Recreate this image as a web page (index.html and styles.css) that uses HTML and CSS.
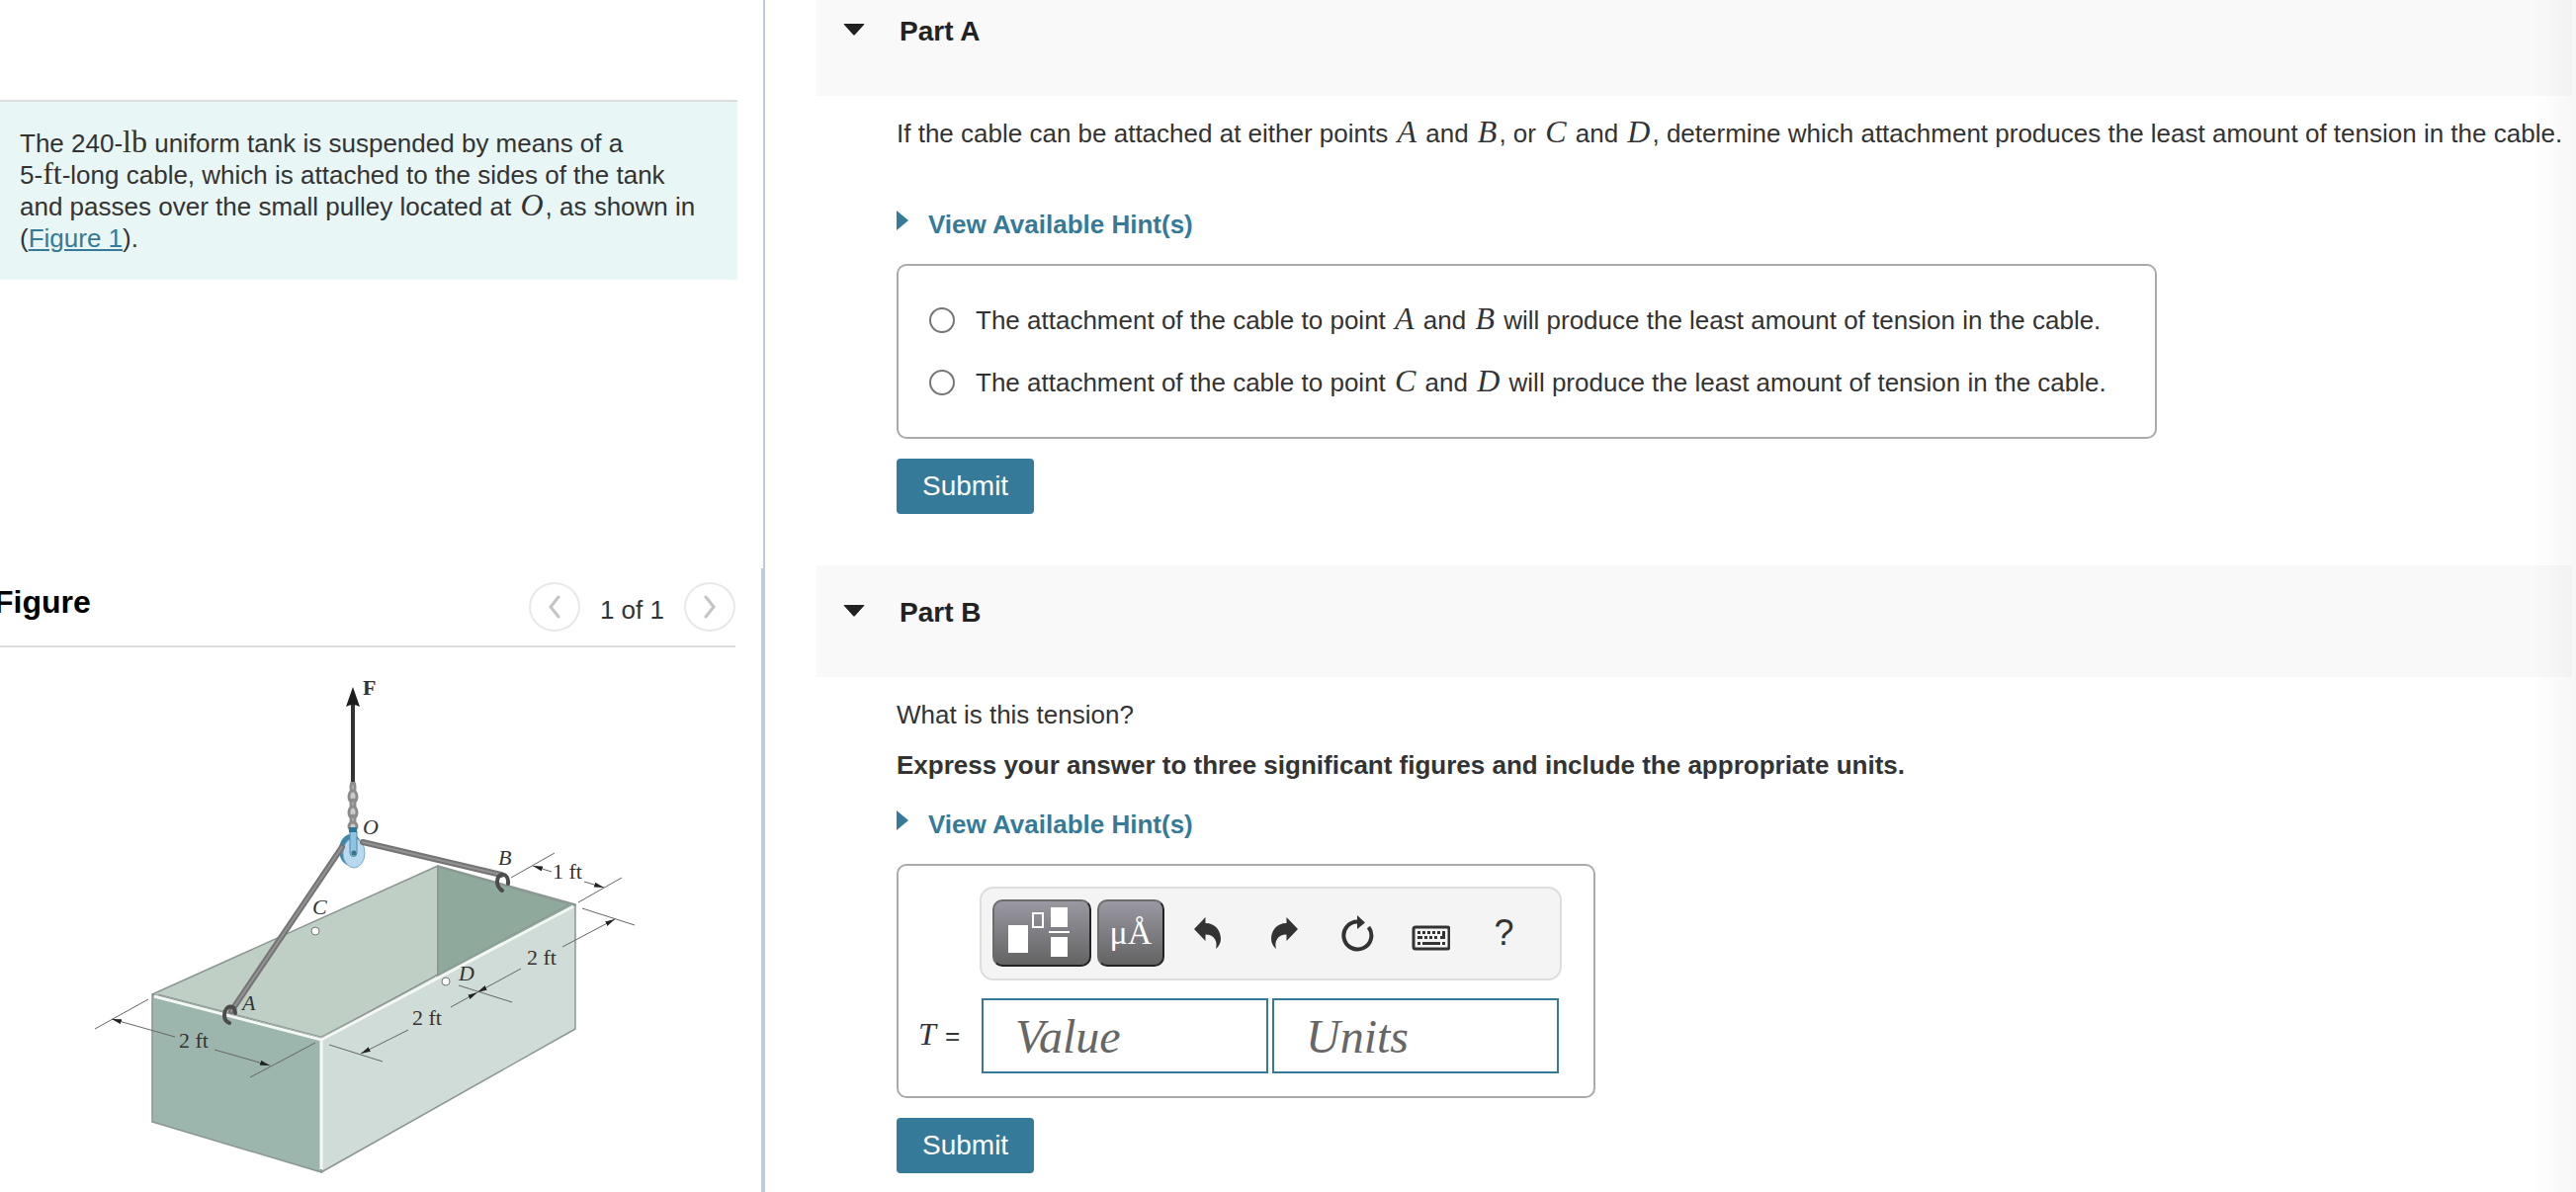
FILE: index.html
```html
<!DOCTYPE html>
<html lang="en">
<head>
  <meta charset="UTF-8" />
  <title>Tank suspended by a cable</title>
  <link rel="stylesheet" href="styles.css">
</head>
<body>
  <aside class="sidebar">
    <section class="problem">
      <div class="problem-text">
        The 240-<span class="math rm">lb</span> uniform tank is suspended by means of a<br>
        5-<span class="math rm">ft</span>-long cable, which is attached to the sides of the tank<br>
        and passes over the small pulley located at <span class="math">O</span>, as shown in<br>
        (<a href="#figure">Figure 1</a>).
      </div>
    </section>

    <section class="figure" id="figure">
      <div class="figure-head">
        <h2>Figure</h2>
        <div class="pager">
          <button class="pager-btn" aria-label="Previous figure">
            <svg width="14" height="24" viewBox="0 0 14 24"><path d="M11 2L3 12l8 10" /></svg>
          </button>
          <span class="pager-count">1 of 1</span>
          <button class="pager-btn" aria-label="Next figure">
            <svg width="14" height="24" viewBox="0 0 14 24"><path d="M3 2l8 10-8 10" /></svg>
          </button>
        </div>
      </div>

      <svg class="drawing" viewBox="0 0 580 540" role="img" aria-label="Tank hanging from a pulley">
        <defs>
          <marker id="arrow" viewBox="0 0 12 6" refX="12" refY="3" markerWidth="10" markerHeight="5" markerUnits="userSpaceOnUse" orient="auto-start-reverse">
            <path d="M0 0L12 3L0 6Z" fill="#222" />
          </marker>
        </defs>

        <!-- tank -->
        <g stroke="#8b9691" stroke-width="1.5" stroke-linejoin="round">
          <path d="M74 345L363 215V325L245 390Z" fill="#bfcfc6" />
          <path d="M363 215L502 254L363 327Z" fill="#8fa99d" />
          <path d="M74 345L245 390V525L74 474Z" fill="#9db6ad" />
          <path d="M245 390L502 254V380L245 525Z" fill="#cfdcd7" />
        </g>
        <path d="M76 347L245 391L500 256M245 391V522" fill="none" stroke="#f3f8f5" stroke-width="3" />
        <path d="M80 345L245 388L496 254L363 216" fill="none" stroke="#8b9691" />
        <g fill="#fff" stroke="#777">
          <circle cx="239" cy="281" r="4" />
          <circle cx="371" cy="332" r="4" />
        </g>

        <!-- dimension lines -->
        <g class="dim">
          <path d="M16 380L70 350M173 429L239 394M253 396L307 413M384 336L438 353M509 258L562 275M505 252L549 227M437 227L481 202" />
          <path d="M33 370L97 388" marker-start="url(#arrow)" />
          <path d="M137 401L193 417" marker-end="url(#arrow)" />
          <path d="M285 405L333 381" marker-start="url(#arrow)" />
          <path d="M376 358L403 343" marker-end="url(#arrow)" />
          <path d="M403 343L447 319" marker-start="url(#arrow)" />
          <path d="M489 297L542 269" marker-end="url(#arrow)" />
          <path d="M459 215L478 221" marker-start="url(#arrow)" />
          <path d="M511 231L531 237" marker-end="url(#arrow)" />
        </g>

        <!-- chain and pulley -->
        <g fill="#ccc" stroke="#8c8c8c" stroke-width="3">
          <ellipse cx="277" cy="136" rx="2" ry="6" />
          <ellipse cx="277" cy="145" rx="4" ry="6" />
          <ellipse cx="277" cy="153" rx="2" ry="5" />
          <ellipse cx="277" cy="161" rx="4" ry="6" />
          <ellipse cx="277" cy="169" rx="2" ry="5" />
          <ellipse cx="277" cy="175" rx="4" ry="4" />
        </g>
        <ellipse cx="275" cy="199" rx="12" ry="16" fill="#3f86a8" />
        <ellipse cx="278" cy="202" rx="11" ry="15" fill="#b9d9ee" stroke="#7fabc5" />
        <path d="M274 180h7v22a3 3 0 0 1-7 0Z" fill="#8fc3df" stroke="#4d8bab" />
        <path d="M273 176h8v5h-8Z" fill="#2f7595" />
        <circle cx="278" cy="202" r="2.5" fill="#3b6f8b" />

        <!-- cable and hooks -->
        <g fill="none" stroke-linecap="round">
          <path d="M266 196L154 362M287 191L427 224" stroke="#747474" stroke-width="6" />
          <path d="M266 196L154 362M287 191L427 224" stroke="#929292" stroke-width="2" />
          <path d="M158 364C158 354 147 356 147 366C147 370 149 373 152 374" stroke="#4c4c4c" stroke-width="4" />
          <path d="M434 233C435 221 423 221 423 231C423 235 425 238 428 240" stroke="#4c4c4c" stroke-width="4" />
        </g>
        <path d="M277 130V50" stroke="#333" stroke-width="4" />
        <path d="M277 34L284 54Q277 50 270 54Z" fill="#1d1d1d" />

        <g class="labels">
          <text class="vec" x="287" y="42">F</text>
          <text class="pt" x="287" y="183">O</text>
          <text class="pt" x="236" y="264">C</text>
          <text class="pt" x="165" y="361">A</text>
          <text class="pt" x="424" y="214">B</text>
          <text class="pt" x="384" y="331">D</text>
          <text x="479" y="228">1 ft</text>
          <text x="453" y="315">2 ft</text>
          <text x="337" y="376">2 ft</text>
          <text x="101" y="399">2 ft</text>
        </g>
      </svg>
    </section>
  </aside>

  <main class="parts">
    <section class="part">
      <header class="part-head">
        <svg class="caret" width="22" height="12" viewBox="0 0 22 12"><path d="M1 0h20q1 0 0 1L12 11q-1 1-2 0L1 1Q0 0 1 0Z" /></svg>
        <h2>Part A</h2>
      </header>
      <div class="part-body">
        <p class="question">If the cable can be attached at either points <span class="math">A</span> and <span class="math">B</span>, or <span class="math">C</span> and <span class="math">D</span>, determine which attachment produces the least amount of tension in the cable.</p>
        <a class="hints hints-a" href="#hints-a"><svg width="12" height="20" viewBox="0 0 12 20"><path d="M0 0L12 10L0 20Z" /></svg>View Available Hint(s)</a>
        <div class="answer choices">
          <label class="choice"><input type="radio" name="attachment" value="ab"><span>The attachment of the cable to point <span class="math">A</span> and <span class="math">B</span> will produce the least amount of tension in the cable.</span></label>
          <label class="choice"><input type="radio" name="attachment" value="cd"><span>The attachment of the cable to point <span class="math">C</span> and <span class="math">D</span> will produce the least amount of tension in the cable.</span></label>
        </div>
        <button class="submit">Submit</button>
      </div>
    </section>

    <section class="part">
      <header class="part-head">
        <svg class="caret" width="22" height="12" viewBox="0 0 22 12"><path d="M1 0h20q1 0 0 1L12 11q-1 1-2 0L1 1Q0 0 1 0Z" /></svg>
        <h2>Part B</h2>
      </header>
      <div class="part-body">
        <p class="question">What is this tension?</p>
        <p class="instructions">Express your answer to three significant figures and include the appropriate units.</p>
        <a class="hints" href="#hints-b"><svg width="12" height="20" viewBox="0 0 12 20"><path d="M0 0L12 10L0 20Z" /></svg>View Available Hint(s)</a>
        <div class="answer entry">
          <div class="toolbar">
            <button class="tool-dark tool-wide" aria-label="Templates">
              <svg width="96" height="64" viewBox="2 2 96 64">
                <path d="M16 26h20v28H16zM59 8h17v20H59zM57 32h21v2H57zM59 38h17v20H59z" fill="#fff" />
                <path d="M41 14h10v14H41z" fill="none" stroke="#fff" stroke-width="2" />
              </svg>
            </button>
            <button class="tool-dark" aria-label="Units symbols">μÅ</button>
            <div class="tool-icons">
              <button class="tool" aria-label="Undo">
                <svg width="40" height="40" viewBox="0 0 40 40"><path d="M6 16L17.5 4V10C28 10 33 18 33 26C33 30 31 33.500 28 36C30 29 27 21.500 17.500 21.500V28Z" /></svg>
              </button>
              <button class="tool" aria-label="Redo">
                <svg width="40" height="40" viewBox="0 0 40 40"><path d="M36 16L24.500 4V10C14 10 9 18 9 26C9 30 11 33.500 14 36C12 29 15 21.500 24.500 21.500V28Z" /></svg>
              </button>
              <button class="tool" aria-label="Reset">
                <svg width="40" height="40" viewBox="0 0 40 40"><path d="M21 2L29 9.500L21 16Z" /><path d="M22 8.500A14 14 0 1 0 32.500 14" fill="none" stroke="#333" stroke-width="4" /></svg>
              </button>
              <button class="tool" aria-label="Keyboard">
                <svg width="40" height="40" viewBox="0 0 40 40">
                  <rect x="3" y="14" width="36" height="22" rx="2" fill="none" stroke="#333" stroke-width="3" />
                  <path d="M7 18h3v3H7zM12 18h3v3h-3zM17 18h3v3h-3zM22 18h3v3h-3zM27 18h3v3h-3zM32 18h3v8h-5v-3h2zM7 23h5v3H7zM14 23h3v3h-3zM19 23h3v3h-3zM24 23h3v3h-3zM7 29h3v3H7zM12 29h18v3H12zM32 29h3v3h-3z" />
                </svg>
              </button>
              <button class="tool" aria-label="Help">?</button>
            </div>
          </div>
          <div class="fields">
            <label for="value"><span class="math">T</span> =</label>
            <input id="value" type="text" placeholder="Value">
            <input id="units" type="text" placeholder="Units" aria-label="Units">
          </div>
        </div>
        <button class="submit">Submit</button>
      </div>
    </section>
  </main>
</body>
</html>
```
FILE: styles.css
```css
* {
  box-sizing: border-box;
}

body {
  margin: 0;
  display: flex;
  min-height: 100vh;
  font-family: "Liberation Sans", Arial, sans-serif;
  font-size: 26px;
  line-height: 32px;
  color: #333;
  background: #fff;
  overflow: hidden;
}

h2,
p {
  margin: 0;
}

a {
  color: #357a98;
}

button {
  font-family: inherit;
  cursor: pointer;
}

/* line-height 0 so the bigger serif never stretches a line of text */
.math {
  font-family: "Liberation Serif", "Times New Roman", serif;
  font-size: 32px;
  font-style: italic;
  line-height: 0;
  padding: 0 2px;
}

.math.rm {
  font-style: normal;
  padding: 0;
}

/* left column */
.sidebar {
  flex: 0 0 774px;
  display: flex;
  flex-direction: column;
}

.problem {
  min-height: 575px;
  padding: 101px 26px 0 0;
  border-right: 2px solid #bccbdd;
}

.problem-text {
  padding: 26px 20px;
  border-top: 2px solid #ddd;
  background: #e8f6f5;
}

.figure {
  flex: 1;
  padding-right: 26px;
  border-right: 4px solid #bccbdd;
}

.figure-head {
  display: flex;
  justify-content: space-between;
  height: 80px;
  border-bottom: 2px solid #ddd;
}

.figure-head h2 {
  margin: 16px 0 0 -6px;
  font-size: 32px;
  line-height: 36px;
  color: #000;
}

.pager {
  display: flex;
  align-items: center;
  gap: 20px;
}

.pager-count {
  padding-top: 6px;
}

.pager-btn {
  width: 52px;
  height: 50px;
  display: flex;
  align-items: center;
  justify-content: center;
  padding: 0;
  border: 2px solid #e8e8e8;
  border-radius: 50%;
  background: #fff;
}

.pager-btn path {
  fill: none;
  stroke: #c4c4c4;
  stroke-width: 3;
  stroke-linecap: round;
}

.drawing {
  display: block;
  width: 580px;
  margin: 6px 0 0 80px;
}

.dim {
  fill: none;
  stroke: #666;
  stroke-width: 1;
}

.labels {
  font-family: "Liberation Serif", "Times New Roman", serif;
  font-size: 22px;
  fill: #333;
}

.labels .pt {
  font-style: italic;
}

.labels .vec {
  font-weight: bold;
}

/* right column */
.parts {
  flex: 1;
  min-width: 0;
  margin-top: -16px;
  padding: 0 4px 0 52px;
}

/* soft shade along the window's right edge */
.parts::after {
  content: "";
  position: fixed;
  top: 0;
  right: 0;
  bottom: 0;
  width: 44px;
  background: linear-gradient(to right, rgba(0, 0, 0, 0), rgba(0, 0, 0, 0.03));
  pointer-events: none;
}

.part {
  margin-bottom: 52px;
}

.part-head {
  display: flex;
  align-items: flex-start;
  gap: 35px;
  height: 113px;
  padding: 32px 27px;
  background: #f9f9f9;
}

.part-head h2 {
  font-size: 28px;
  color: #222;
}

.caret {
  margin-top: 8px;
  fill: #222;
}

.part-body {
  padding: 22px 0 0 81px;
}

.instructions {
  margin-top: 19px;
  font-weight: bold;
}

.hints {
  display: flex;
  gap: 20px;
  margin-top: 28px;
  font-weight: bold;
  text-decoration: none;
}

.hints-a {
  margin-top: 60px;
}

.hints svg {
  margin-top: 2px;
  fill: #357a98;
}

.answer {
  width: fit-content;
  margin: 24px 0 20px;
  border: 2px solid #aaa;
  border-radius: 10px;
}

.choices {
  padding: 39px 49px 39px 31px;
}

.choice {
  display: flex;
  align-items: center;
  gap: 21px;
}

.choice + .choice {
  margin-top: 31px;
}

.choice input {
  appearance: none;
  width: 26px;
  height: 26px;
  margin: 0;
  border: 2px solid #767676;
  border-radius: 50%;
}

.choice input:checked {
  background: #357a98;
}

.submit {
  display: block;
  height: 56px;
  padding: 0 26px;
  border: none;
  border-radius: 4px;
  background: #357a98;
  color: #fff;
  font-size: 28px;
}

.entry {
  padding: 21px 32px 23px 18px;
}

.toolbar {
  display: flex;
  align-items: flex-start;
  gap: 6px;
  height: 95px;
  margin-left: 64px;
  padding: 11px;
  border: 2px solid #ddd;
  border-radius: 14px;
  background: #f4f4f4;
}

.tool-dark {
  width: 68px;
  height: 68px;
  padding: 0;
  border: 2px solid;
  border-color: #6c6c6c #222 #222 #6c6c6c;
  border-radius: 10px;
  background: linear-gradient(#9a98a2, #636363);
  color: #fff;
  font-family: "Liberation Serif", "Times New Roman", serif;
  font-size: 34px;
}

.tool-wide {
  width: 100px;
}

.tool-dark svg,
.tool svg {
  display: block;
}

.tool-icons {
  display: flex;
  padding-right: 8px;
}

.tool {
  width: 75px;
  height: 68px;
  display: flex;
  align-items: center;
  justify-content: center;
  padding: 0;
  border: none;
  background: none;
  color: #333;
  fill: #333;
  font-size: 36px;
}

.fields {
  display: flex;
  align-items: center;
  gap: 4px;
  margin-top: 18px;
}

.fields label {
  width: 62px;
}

.fields input {
  width: 290px;
  height: 76px;
  padding: 0 32px;
  border: 2px solid #357a98;
  background: #fff;
  color: #333;
  font-family: "Liberation Serif", "Times New Roman", serif;
  font-size: 48px;
  font-style: italic;
}

.fields input::placeholder {
  color: #666;
  opacity: 1;
}
```
